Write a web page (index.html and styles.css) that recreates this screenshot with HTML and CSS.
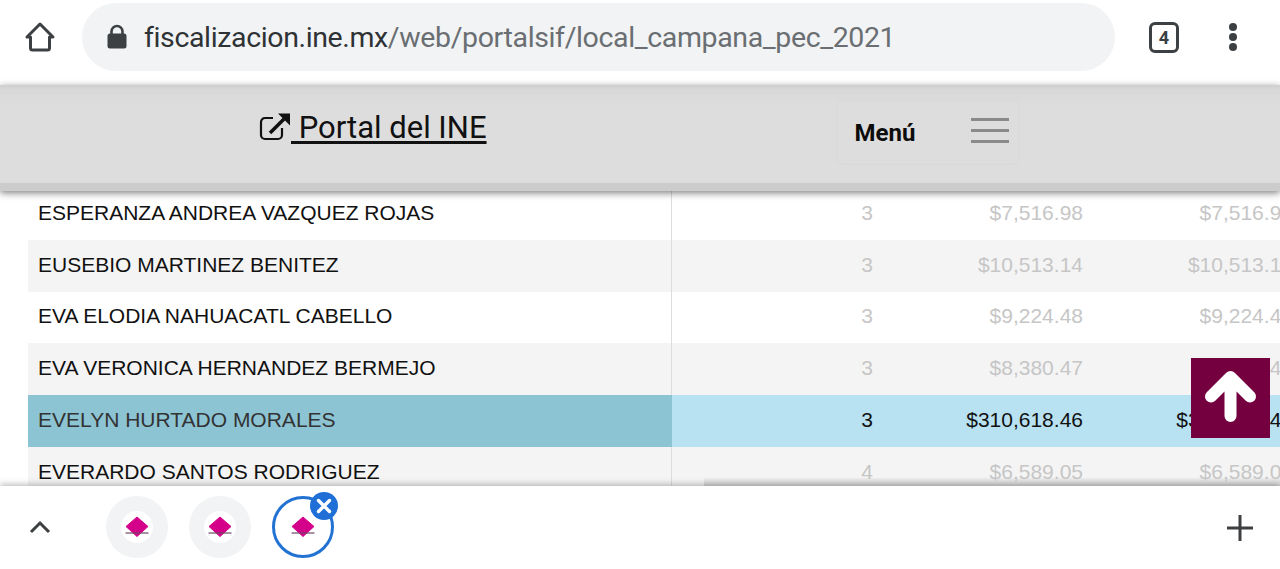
FILE: index.html
```html
<!DOCTYPE html>
<html>
<head>
    <title>Portal del INE</title>
    <link rel="stylesheet" href="styles.css">
</head>
<body>
<div class="phone">
    <div class="toolbar">
        <svg class="home" viewBox="0 0 32 32" width="32" height="32"><path d="M16 3 L29 16 H25.5 V27 a2 2 0 0 1 -2 2 H8.500 a2 2 0 0 1 -2 -2 V16 H3 Z" fill="none" stroke="#3c4043" stroke-width="3" stroke-linejoin="round"/></svg>
        <div class="urlbar">
            <svg class="lock" viewBox="0 0 22 26" width="22" height="26"><path d="M5.500 11 V7.500 a5.500 5.500 0 0 1 11 0 V11" fill="none" stroke="#3c4043" stroke-width="2.600"/><rect x="1.500" y="9.500" width="19" height="15" rx="2.500" fill="#3c4043"/></svg>
            <span class="host">fiscalizacion.ine.mx</span><span class="path">/web/portalsif/local_campana_pec_2021</span>
        </div>
        <div class="tabcount">4</div>
        <div class="dots"><i></i><i></i><i></i></div>
    </div>

    <div class="header">
        <a class="portal" href="#">
            <svg class="extlink" viewBox="0 0 32 30" width="32" height="30"><path d="M14 6 H6 a4 4 0 0 0 -4 4 V23 a4 4 0 0 0 4 4 H19 a4 4 0 0 0 4 -4 V16" fill="none" stroke="#111" stroke-width="2.200"/><path d="M11 21 L25 7" stroke="#111" stroke-width="3.600" fill="none"/><path d="M19 1.500 H31 V13.500 Z" fill="#111"/></svg><span> Portal del INE</span>
        </a>
        <div class="menubtn">
            <span class="menulabel">Menú</span>
            <div class="burger"><i></i><i></i><i></i></div>
        </div>
    </div>

    <div class="content">
        <table class="results">
            <tr><td>ESPERANZA ANDREA VAZQUEZ ROJAS</td><td>3</td><td>$7,516.98</td><td>$7,516.98</td></tr>
            <tr><td>EUSEBIO MARTINEZ BENITEZ</td><td>3</td><td>$10,513.14</td><td>$10,513.14</td></tr>
            <tr><td>EVA ELODIA NAHUACATL CABELLO</td><td>3</td><td>$9,224.48</td><td>$9,224.48</td></tr>
            <tr><td>EVA VERONICA HERNANDEZ BERMEJO</td><td>3</td><td>$8,380.47</td><td>$8,380.47</td></tr>
            <tr class="selected"><td>EVELYN HURTADO MORALES</td><td>3</td><td>$310,618.46</td><td>$310,618.46</td></tr>
            <tr><td>EVERARDO SANTOS RODRIGUEZ</td><td>4</td><td>$6,589.05</td><td>$6,589.05</td></tr>
        </table>
        <div class="hscroll"></div>
        <a class="totop" href="#">
            <svg viewBox="0 0 80 80" width="80" height="80"><path d="M39.500 22 V58 M20 38.500 L39.500 19 L59 38.500" fill="none" stroke="#fff" stroke-width="12" stroke-linecap="round" stroke-linejoin="round"/></svg>
        </a>
    </div>

    <div class="tabstrip">
        <svg class="chevron" viewBox="0 0 24 16" width="24" height="16"><path d="M3 13 L12 4 L21 13" fill="none" stroke="#3c4043" stroke-width="3"/></svg>
        <div class="tabs">
            <div class="tab">
                <div class="favicon"><svg viewBox="0 0 30 30" width="30" height="30"><path d="M15 5 L26 14.500 L15 24.500 L4 14.500 Z" fill="#d4008a" stroke="#d4008a" stroke-linejoin="round"/><path d="M3.500 21 H26.500" stroke="#6b4a66" stroke-width="1.200"/></svg></div>
            </div>
            <div class="tab">
                <div class="favicon"><svg viewBox="0 0 30 30" width="30" height="30"><path d="M15 5 L26 14.500 L15 24.500 L4 14.500 Z" fill="#d4008a" stroke="#d4008a" stroke-linejoin="round"/><path d="M3.500 21 H26.500" stroke="#6b4a66" stroke-width="1.200"/></svg></div>
            </div>
            <div class="tab active">
                <div class="favicon"><svg viewBox="0 0 30 30" width="30" height="30"><path d="M15 5 L26 14.500 L15 24.500 L4 14.500 Z" fill="#d4008a" stroke="#d4008a" stroke-linejoin="round"/><path d="M3.500 21 H26.500" stroke="#6b4a66" stroke-width="1.200"/></svg></div>
                <div class="closebadge"><svg viewBox="0 0 28 28" width="28" height="28"><path d="M8.500 8.500 L19.500 19.500 M19.500 8.500 L8.500 19.500" stroke="#fff" stroke-width="3.400" stroke-linecap="round"/></svg></div>
            </div>
        </div>
        <svg class="plus" viewBox="0 0 26 26" width="26" height="26"><path d="M13 0 V26 M0 13 H26" stroke="#3c4043" stroke-width="3"/></svg>
    </div>
</div>
</body>
</html>
```

FILE: styles.css
```css
html, body {
    margin: 0;
    padding: 0;
    background-color: #fff;
}
.phone {
    width: 1280px;
    height: 569px;
    display: flex;
    flex-direction: column;
    overflow: hidden;
    font-family: Roboto, sans-serif;
}

/* browser toolbar */
.toolbar {
    height: 85px;
    flex: none;
    display: flex;
    align-items: center;
    background-color: #fff;
    padding-bottom: 11px;
    box-sizing: border-box;
}
.home {
    margin-left: 24px;
    margin-right: 26px;
    flex: none;
}
.urlbar {
    width: 1033px;
    height: 68px;
    flex: none;
    border-radius: 34px;
    background-color: #f1f3f4;
    display: flex;
    align-items: center;
    font-size: 28.500px;
    letter-spacing: -0.37px;
    box-sizing: border-box;
    padding-left: 24px;
}
.lock {
    margin-right: 16px;
}
.host {
    color: #2f3235;
}
.path {
    color: #6a6e72;
}
.tabcount {
    width: 30px;
    height: 31px;
    margin-left: 34px;
    border: 3px solid #3c4043;
    border-radius: 6px;
    box-sizing: border-box;
    text-align: center;
    line-height: 25px;
    font-size: 18px;
    font-weight: bold;
    color: #3c4043;
}
.dots {
    margin-left: 50px;
    display: flex;
    flex-direction: column;
    gap: 2px;
}
.dots i {
    display: block;
    width: 8px;
    height: 8px;
    border-radius: 50%;
    background-color: #3c4043;
}

/* site header */
.header {
    height: 106px;
    flex: none;
    position: relative;
    z-index: 2;
    display: flex;
    box-sizing: border-box;
    background: linear-gradient(#cfcfcf, #d8d8d8 5px, #dddddd 20px);
    border-bottom: 8px solid #cccccc;
    box-shadow: 0 2px 7px rgba(0, 0, 0, 0.5);
}
.portal {
    margin-left: 259px;
    margin-top: 22px;
    height: 40px;
    color: #111;
    font-size: 31px;
    text-decoration: underline;
    text-underline-offset: 3px;
    display: flex;
    align-items: center;
    white-space: pre;
}
.extlink {
    flex: none;
}
.menubtn {
    margin-left: 349px;
    margin-top: 15px;
    width: 184px;
    height: 65px;
    box-sizing: border-box;
    border: 1px solid #d9d9d9;
    border-radius: 6px;
    display: flex;
    align-items: center;
    padding-left: 18px;
}
.menulabel {
    font-size: 24px;
    font-weight: bold;
    color: #0c0c0c;
}
.burger {
    margin-left: 56px;
    width: 38px;
    display: flex;
    flex-direction: column;
    gap: 8px;
    margin-top: -4px;
}
.burger i {
    display: block;
    height: 3px;
    background-color: #8a8a8a;
}

/* table */
.content {
    flex: 1;
    position: relative;
    overflow: hidden;
    background-color: #fff;
}
.results {
    margin-left: 28px;
    margin-top: -3px;
    border-collapse: collapse;
    table-layout: fixed;
    width: 1275px;
    font-family: "Liberation Sans", Arial, sans-serif;
    font-size: 21px;
}
.results td {
    height: 51.800px;
    padding: 0 10px 2px;
    box-sizing: border-box;
    text-align: right;
    color: #c6c6c6;
    overflow: hidden;
    white-space: nowrap;
}
.results td:nth-child(1) {
    width: 643px;
    text-align: left;
    color: #111;
    border-right: 1px solid #dddddd;
}
.results td:nth-child(2) {
    width: 212px;
}
.results td:nth-child(3) {
    width: 210px;
}
.results td:nth-child(4) {
    width: 210px;
}
.results tr:nth-child(even) td {
    background-color: #f4f4f4;
}
.results tr.selected td {
    background-color: #b8e2f1;
    color: #111;
}
.results tr.selected td:nth-child(1) {
    background-color: #8dc4d4;
    color: #333;
    border-right-color: #8dc4d4;
}
.hscroll {
    position: absolute;
    left: 704px;
    right: 0;
    bottom: 0;
    height: 8px;
    background: linear-gradient(rgba(208, 208, 208, 0.2), #d4d4d4);
}
.totop {
    position: absolute;
    left: 1191px;
    top: 167px;
    width: 79px;
    height: 80px;
    background-color: #75003f;
}

/* tab strip */
.tabstrip {
    height: 83px;
    flex: none;
    position: relative;
    z-index: 2;
    display: flex;
    align-items: center;
    background-color: #fff;
    box-shadow: 0 -2px 6px rgba(0, 0, 0, 0.25);
}
.chevron {
    margin-left: 28px;
    margin-top: -2px;
    flex: none;
}
.tabs {
    margin-left: 54px;
    margin-top: -2px;
    display: flex;
    gap: 21px;
}
.tab {
    width: 62px;
    height: 62px;
    border-radius: 50%;
    background-color: #f1f3f4;
    position: relative;
    display: flex;
    align-items: center;
    justify-content: center;
    box-sizing: border-box;
}
.favicon {
    width: 32px;
    height: 32px;
    border-radius: 50%;
    background-color: #fff;
    display: flex;
    align-items: center;
    justify-content: center;
}
.tab.active {
    background-color: #fff;
    border: 3px solid #2272d3;
}
.closebadge {
    position: absolute;
    right: -7px;
    top: -7px;
    width: 28px;
    height: 28px;
    border-radius: 50%;
    background-color: #1f6fd6;
}
.plus {
    margin-left: auto;
    margin-right: 27px;
    flex: none;
}
```
